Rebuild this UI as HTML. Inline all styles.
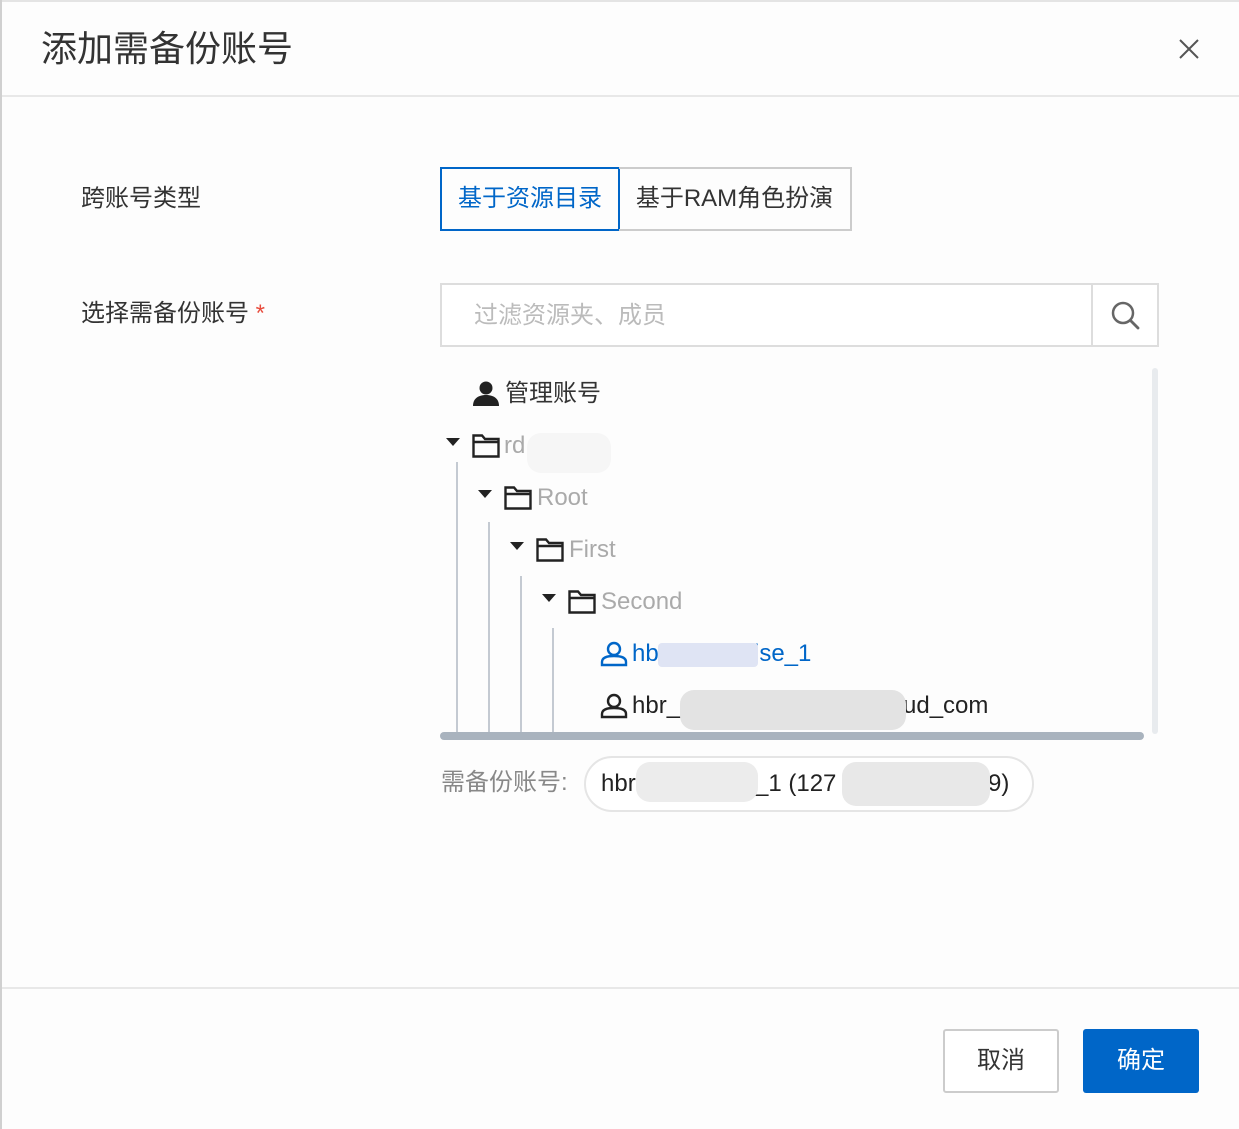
<!DOCTYPE html>
<html><head><meta charset="utf-8"><style>
*{margin:0;padding:0;box-sizing:border-box}
body{width:1239px;height:1129px;background:#fdfdfd;font-family:"Liberation Sans","Noto Sans CJK SC",sans-serif;position:relative;overflow:hidden;color:#333}
.a{position:absolute}
.t{font-size:24px;white-space:nowrap;line-height:28px}
.blur{position:absolute;border-radius:14px;background:#e6e6e6}
</style></head><body>
<div class="a" style="left:0;top:0;width:1239px;height:2px;background:#e4e4e4"></div>
<div class="a" style="left:0;top:0;width:2px;height:1129px;background:#d0d0d0"></div>
<div class="a t" style="left:41px;top:28px;font-size:36px;line-height:42px;color:#333">添加需备份账号</div>
<svg class="a" style="left:1178px;top:38px" width="22" height="22"><path d="M2 2L20 20M20 2L2 20" stroke="#555" stroke-width="2"/></svg>
<div class="a" style="left:2px;top:95px;width:1237px;height:2px;background:#e8e8e8"></div>

<div class="a t" style="left:81px;top:185px">跨账号类型</div>
<div class="a t" style="left:440px;top:167px;width:180px;height:64px;border:2px solid #0066c8;color:#0066c8;text-align:center;line-height:60px">基于资源目录</div>
<div class="a t" style="left:619px;top:167px;width:233px;height:64px;border:2px solid #ccc;border-left:none;text-align:center;line-height:60px">基于RAM角色扮演</div>

<div class="a t" style="left:81px;top:300px">选择需备份账号 <span style="color:#e84c3d">*</span></div>
<div class="a" style="left:440px;top:283px;width:719px;height:64px;border:2px solid #ddd;background:#fff"></div>
<div class="a" style="left:1091px;top:285px;width:2px;height:60px;background:#ddd"></div>
<div class="a t" style="left:474px;top:302px;color:#bbb">过滤资源夹、成员</div>
<svg class="a" style="left:1110px;top:300px" width="32" height="32"><circle cx="13" cy="13" r="10" fill="none" stroke="#666" stroke-width="2.5"/><path d="M20.5 20.5L28 28" stroke="#666" stroke-width="2.8" stroke-linecap="round"/></svg>

<svg class="a" style="left:472px;top:380px" width="28" height="28"><circle cx="14" cy="8" r="6.5" fill="#222"/><path d="M1 26C1 18 7 15 14 15S27 18 27 26Z" fill="#222"/></svg>
<div class="a t" style="left:505px;top:380px">管理账号</div>

<svg class="a" width="0" height="0"><defs><symbol id="f" viewBox="0 0 28 24"><path d="M1.5 1.5H10L13 5H26.5V22.5H1.5ZM1.5 8H26.5" fill="none" stroke="#222" stroke-width="2.4"/></symbol><symbol id="tri" viewBox="0 0 14 10"><path d="M0 1H14L7 9Z" fill="#222"/></symbol></defs></svg>

<svg class="a" style="left:446px;top:437px" width="14" height="10"><use href="#tri"/></svg>
<svg class="a" style="left:472px;top:434px" width="28" height="24"><use href="#f"/></svg>
<div class="a t" style="left:504px;top:432px;color:#aaa">rd</div>
<div class="a t" style="left:596px;top:432px;color:#aaa">k</div>
<div class="blur" style="left:527px;top:433px;width:84px;height:40px;background:#f6f6f6"></div>

<svg class="a" style="left:478px;top:489px" width="14" height="10"><use href="#tri"/></svg>
<svg class="a" style="left:504px;top:486px" width="28" height="24"><use href="#f"/></svg>
<div class="a t" style="left:537px;top:484px;color:#aaa">Root</div>

<svg class="a" style="left:510px;top:541px" width="14" height="10"><use href="#tri"/></svg>
<svg class="a" style="left:536px;top:538px" width="28" height="24"><use href="#f"/></svg>
<div class="a t" style="left:569px;top:536px;color:#aaa">First</div>

<svg class="a" style="left:542px;top:593px" width="14" height="10"><use href="#tri"/></svg>
<svg class="a" style="left:568px;top:590px" width="28" height="24"><use href="#f"/></svg>
<div class="a t" style="left:601px;top:588px;color:#aaa">Second</div>

<svg class="a" style="left:600px;top:641px" width="28" height="26"><circle cx="14" cy="8" r="6" fill="none" stroke="#0066c8" stroke-width="2.4"/><path d="M2 24V21C2 17 6 15 14 15S26 17 26 21V24Z" fill="none" stroke="#0066c8" stroke-width="2.4"/></svg>
<div class="a t" style="left:632px;top:640px;color:#0066c8">hb</div>
<div class="a t" style="left:754px;top:640px;color:#0066c8">ise_1</div>
<div class="a" style="left:658px;top:643px;width:100px;height:24px;background:#dfe4f4;border-radius:4px"></div>

<svg class="a" style="left:600px;top:693px" width="28" height="26"><circle cx="14" cy="8" r="6" fill="none" stroke="#222" stroke-width="2.4"/><path d="M2 24V21C2 17 6 15 14 15S26 17 26 21V24Z" fill="none" stroke="#222" stroke-width="2.4"/></svg>
<div class="a t" style="left:632px;top:692px;color:#222">hbr_</div>
<div class="a t" style="left:903px;top:692px;color:#222">ud_com</div>
<div class="blur" style="left:680px;top:690px;width:226px;height:40px;background:#e3e3e3"></div>

<div class="a" style="left:456px;top:462px;width:2px;height:272px;background:#c4cad2"></div>
<div class="a" style="left:488px;top:522px;width:2px;height:212px;background:#c4cad2"></div>
<div class="a" style="left:520px;top:576px;width:2px;height:158px;background:#c4cad2"></div>
<div class="a" style="left:552px;top:628px;width:2px;height:106px;background:#c4cad2"></div>
<div class="a" style="left:1152px;top:368px;width:6px;height:366px;background:#e8ebee;border-radius:3px"></div>
<div class="a" style="left:440px;top:732px;width:704px;height:8px;background:#a9b3be;border-radius:4px"></div>

<div class="a t" style="left:441px;top:769px;color:#888">需备份账号:</div>
<div class="a" style="left:584px;top:756px;width:450px;height:56px;border:2px solid #e5e5e5;border-radius:28px;background:#fff"></div>
<div class="a t" style="left:601px;top:770px;color:#222">hbr</div>
<div class="a t" style="left:755px;top:770px;color:#222">_1 (127</div>
<div class="a t" style="left:988px;top:770px;color:#222">9)</div>
<div class="blur" style="left:636px;top:762px;width:122px;height:40px;background:#ececec"></div>
<div class="blur" style="left:842px;top:762px;width:148px;height:44px;background:#e8e8e8"></div>

<div class="a" style="left:2px;top:987px;width:1237px;height:2px;background:#e8e8e8"></div>
<div class="a t" style="left:943px;top:1029px;width:116px;height:64px;border:2px solid #ccc;border-radius:3px;background:#fff;text-align:center;line-height:60px">取消</div>
<div class="a t" style="left:1083px;top:1029px;width:116px;height:64px;background:#0066c8;border-radius:3px;color:#fff;text-align:center;line-height:64px">确定</div>
</body></html>
